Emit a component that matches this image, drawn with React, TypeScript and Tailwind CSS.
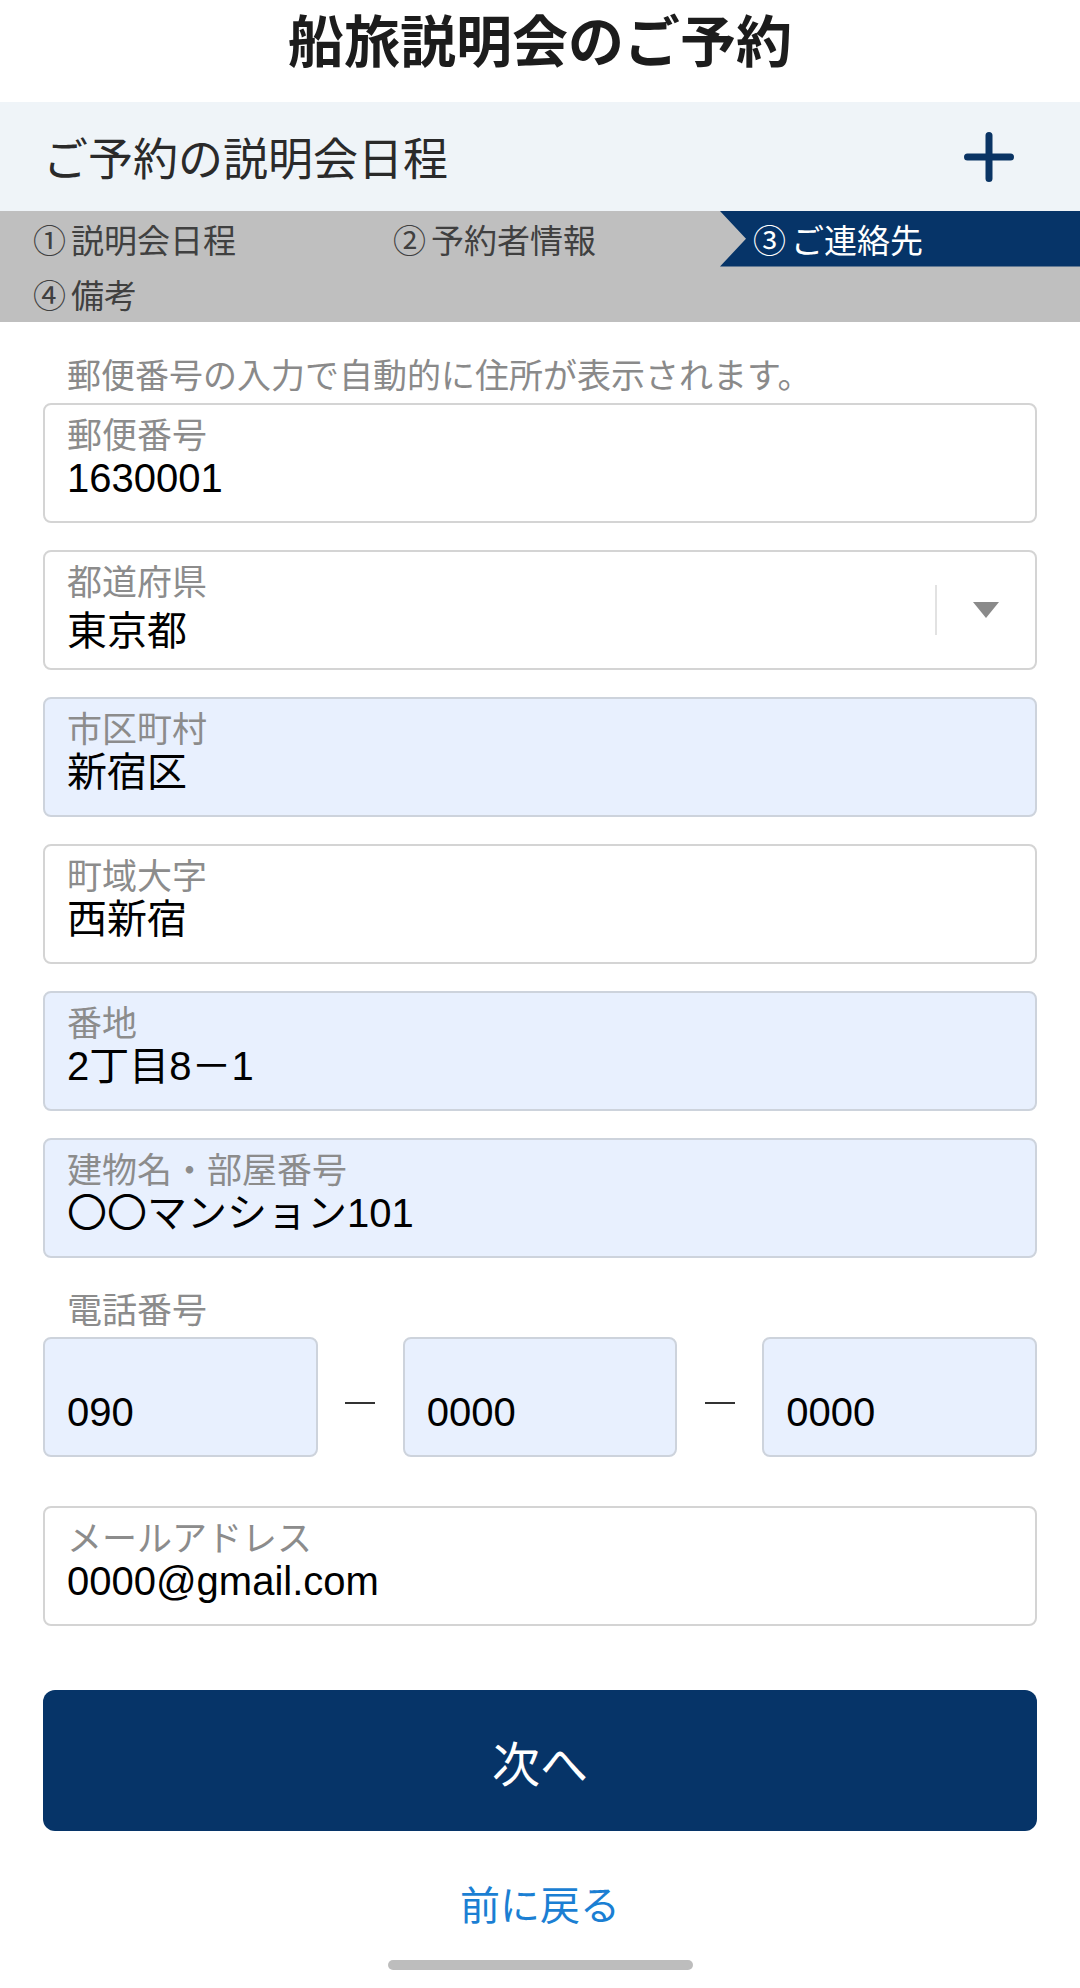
import React from "react";

const jp = "[font-family:'Noto_Sans_CJK_JP',sans-serif]";
const mixed = "[font-family:'Liberation_Sans','Noto_Sans_CJK_JP',sans-serif]";

type FieldProps = {
  label?: string;
  value: string;
  filled?: boolean;
  select?: boolean;
};

const Field = ({ label, value, filled, select }: FieldProps) => (
  <div
    className={`relative h-[120px] rounded-[8px] border-2 px-[22px] pt-[8px] ${
      filled ? "bg-[#e8f0fe] border-[#cdd3dc]" : "bg-white border-[#d4d4d4]"
    }`}
  >
    <div className={`h-[40px] text-[35px] leading-[40px] text-[#8c8c8c] ${jp}`}>
      {label}
    </div>
    <div
      className={`text-[40px] leading-[46px] text-black ${mixed} ${
        select ? "mt-[8px]" : "mt-[2px]"
      }`}
    >
      {value}
    </div>
    {select && (
      <>
        <div className="absolute left-[890px] top-[33px] h-[50px] w-[2px] bg-[#e2e2e2]" />
        <svg
          className="absolute left-[928px] top-[50px]"
          width="26"
          height="16"
          viewBox="0 0 26 16"
        >
          <polygon points="0,0 26,0 13,16" fill="#8a8a8a" />
        </svg>
      </>
    )}
  </div>
);

const Dash = () => (
  <div className="flex items-center justify-center pt-[12px]">
    <div className="h-[2px] w-[30px] bg-[#333]" />
  </div>
);

const steps = [
  ["①", "説明会日程"],
  ["②", "予約者情報"],
  ["③", "ご連絡先"],
  ["④", "備考"],
];

export default function App() {
  return (
    <div className={`w-[1080px] min-h-[1988px] bg-white ${jp}`}>
      <div className="flex h-[102px] justify-center pt-[10px]">
        <h1 className="text-[56px] font-bold leading-[56px] text-[#1c1c1c]">
          船旅説明会のご予約
        </h1>
      </div>

      <div className="flex h-[109px] items-center justify-between bg-[#eff4f8] pl-[43px] pr-[66px]">
        <span className="text-[45px] leading-[52px] text-[#2a2a2a]">
          ご予約の説明会日程
        </span>
        <svg width="50" height="50" viewBox="0 0 50 50">
          <path
            d="M25 3.5V46.5M3.5 25H46.5"
            stroke="#0a3464"
            strokeWidth="7"
            strokeLinecap="round"
          />
        </svg>
      </div>

      <div className="grid grid-cols-3 bg-[#bfbfbf]">
        {steps.map(([n, s], i) => (
          <div
            key={s}
            className={`flex h-[55.5px] items-center pl-[33px] text-[33px] leading-[40px] ${
              i === 2
                ? "bg-[#063468] text-white [clip-path:polygon(0_0,100%_0,100%_100%,0_100%,26px_50%)]"
                : "text-[#404040]"
            }`}
          >
            <span className="mr-[5px]">{n}</span>
            {s}
          </div>
        ))}
      </div>

      <div className="px-[43px]">
        <p className="mt-[32px] mb-[9px] pl-[24px] text-[34px] leading-[40px] text-[#8a8a8a]">
          郵便番号の入力で自動的に住所が表示されます。
        </p>

        <div className="flex flex-col gap-[27px]">
          <Field label="郵便番号" value="1630001" />
          <Field label="都道府県" value="東京都" select />
          <Field label="市区町村" value="新宿区" filled />
          <Field label="町域大字" value="西新宿" />
          <Field label="番地" value="2丁目8－1" filled />
          <Field label="建物名・部屋番号" value="〇〇マンション101" filled />
        </div>

        <div className="mt-[30px] mb-[9px] pl-[24px] text-[35px] leading-[40px] text-[#8c8c8c]">
          電話番号
        </div>
        <div className="grid grid-cols-[1fr_85px_1fr_85px_1fr]">
          <Field value="090" filled />
          <Dash />
          <Field value="0000" filled />
          <Dash />
          <Field value="0000" filled />
        </div>

        <div className="mt-[49px]">
          <Field label="メールアドレス" value="0000@gmail.com" />
        </div>

        <button className="mt-[64px] flex h-[141px] w-full items-center justify-center rounded-[12px] bg-[#063468] text-[48px] leading-[56px] text-white">
          次へ
        </button>

        <div className="mt-[48px] text-center text-[40px] leading-[48px] text-[#1b7fd3]">
          前に戻る
        </div>

        <div className="mx-auto mt-[33px] h-[10px] w-[305px] rounded-full bg-[#bdbdbd]" />
      </div>
    </div>
  );
}
